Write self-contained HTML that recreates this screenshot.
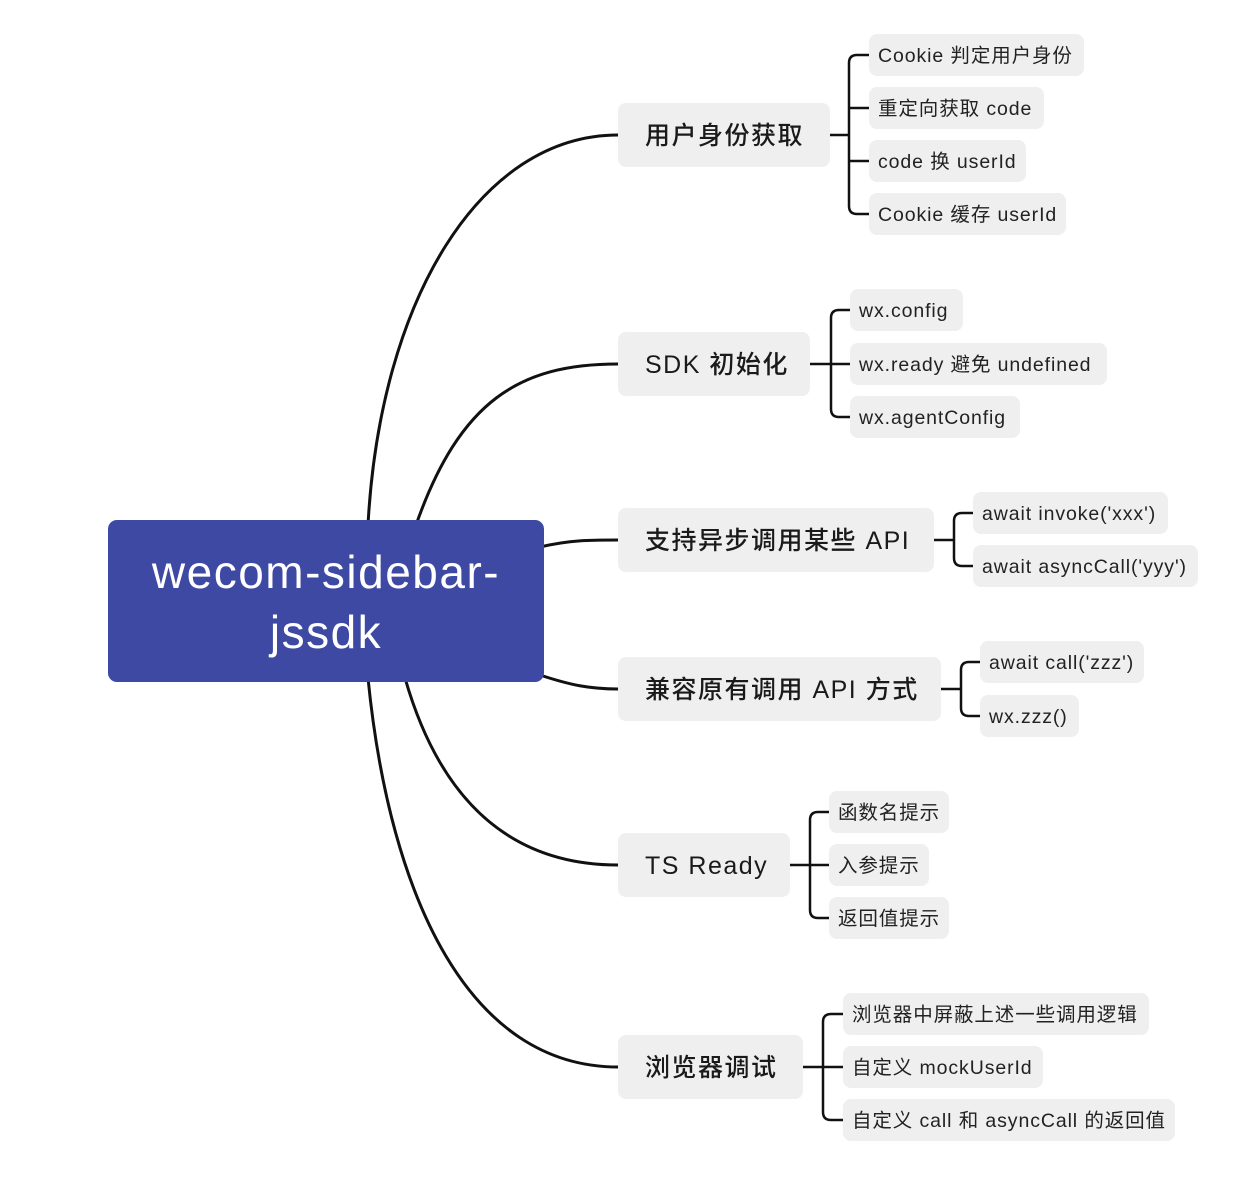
<!DOCTYPE html>
<html><head><meta charset="utf-8"><style>
body{margin:0;width:1260px;height:1184px;background:#fff;position:relative;overflow:hidden;font-family:"Liberation Sans","Noto Sans CJK SC",sans-serif;color:#1a1a1a}
.n{position:absolute;background:#efefef;border-radius:8px;height:64px;line-height:66px;padding-left:27px;box-sizing:border-box;font-size:25px;font-weight:500;white-space:nowrap;letter-spacing:1.5px}
.l{position:absolute;background:#efefef;border-radius:8px;height:42px;line-height:45px;padding-left:9px;box-sizing:border-box;font-size:19.5px;white-space:nowrap;color:#222;letter-spacing:0.9px}
#c{position:absolute;left:108px;top:520px;width:436px;height:162px;background:#3d49a3;border-radius:9px;color:#fff;font-size:46px;letter-spacing:1.5px;text-align:center;line-height:60px;padding-top:22px;box-sizing:border-box}
svg{position:absolute;left:0;top:0}
</style></head><body>
<svg width="1260" height="1184" fill="none" stroke="#111" stroke-width="3">
<path d="M368,525 C380,300 480,135 618,135"/>
<path d="M416,525 C460,400 520,364 618,364"/>
<path d="M540,547 C570,540 590,540 618,540"/>
<path d="M540,675 C570,685 590,689 618,689"/>
<path d="M405,678 C440,800 510,865 618,865"/>
<path d="M368,678 C390,900 470,1067 618,1067"/>
<g stroke-width="2.5">
<path d="M830,135 H849 M869,55 H857 Q849,55 849,63 V206 Q849,214 857,214 H869 M849,108 H869 M849,161 H869"/>
<path d="M810,364 H850 M850,310 H839 Q831,310 831,318 V409 Q831,417 839,417 H850"/>
<path d="M934,540 H954 M973,513 H962 Q954,513 954,521 V558 Q954,566 962,566 H973"/>
<path d="M941,689 H961 M980,662 H969 Q961,662 961,670 V708 Q961,716 969,716 H980"/>
<path d="M790,865 H829 M829,812 H818 Q810,812 810,820 V910 Q810,918 818,918 H829"/>
<path d="M803,1067 H843 M843,1014 H831 Q823,1014 823,1022 V1112 Q823,1120 831,1120 H843"/>
</g>
</svg>
<div id="c">wecom-sidebar-<br>jssdk</div>
<div class="n" style="left:618px;top:103px;width:212px">用户身份获取</div>
<div class="n" style="left:618px;top:332px;width:192px">SDK 初始化</div>
<div class="n" style="left:618px;top:508px;width:316px">支持异步调用某些 API</div>
<div class="n" style="left:618px;top:657px;width:323px">兼容原有调用 API 方式</div>
<div class="n" style="left:618px;top:833px;width:172px">TS Ready</div>
<div class="n" style="left:618px;top:1035px;width:185px">浏览器调试</div>

<div class="l" style="left:869px;top:34px;width:215px">Cookie 判定用户身份</div>
<div class="l" style="left:869px;top:87px;width:175px">重定向获取 code</div>
<div class="l" style="left:869px;top:140px;width:157px">code 换 userId</div>
<div class="l" style="left:869px;top:193px;width:197px">Cookie 缓存 userId</div>

<div class="l" style="left:850px;top:289px;width:113px">wx.config</div>
<div class="l" style="left:850px;top:343px;width:257px">wx.ready 避免 undefined</div>
<div class="l" style="left:850px;top:396px;width:170px">wx.agentConfig</div>

<div class="l" style="left:973px;top:492px;width:195px">await invoke('xxx')</div>
<div class="l" style="left:973px;top:545px;width:225px">await asyncCall('yyy')</div>

<div class="l" style="left:980px;top:641px;width:164px">await call('zzz')</div>
<div class="l" style="left:980px;top:695px;width:99px">wx.zzz()</div>

<div class="l" style="left:829px;top:791px;width:120px">函数名提示</div>
<div class="l" style="left:829px;top:844px;width:100px">入参提示</div>
<div class="l" style="left:829px;top:897px;width:120px">返回值提示</div>

<div class="l" style="left:843px;top:993px;width:306px">浏览器中屏蔽上述一些调用逻辑</div>
<div class="l" style="left:843px;top:1046px;width:200px">自定义 mockUserId</div>
<div class="l" style="left:843px;top:1099px;width:332px">自定义 call 和 asyncCall 的返回值</div>
</body></html>
